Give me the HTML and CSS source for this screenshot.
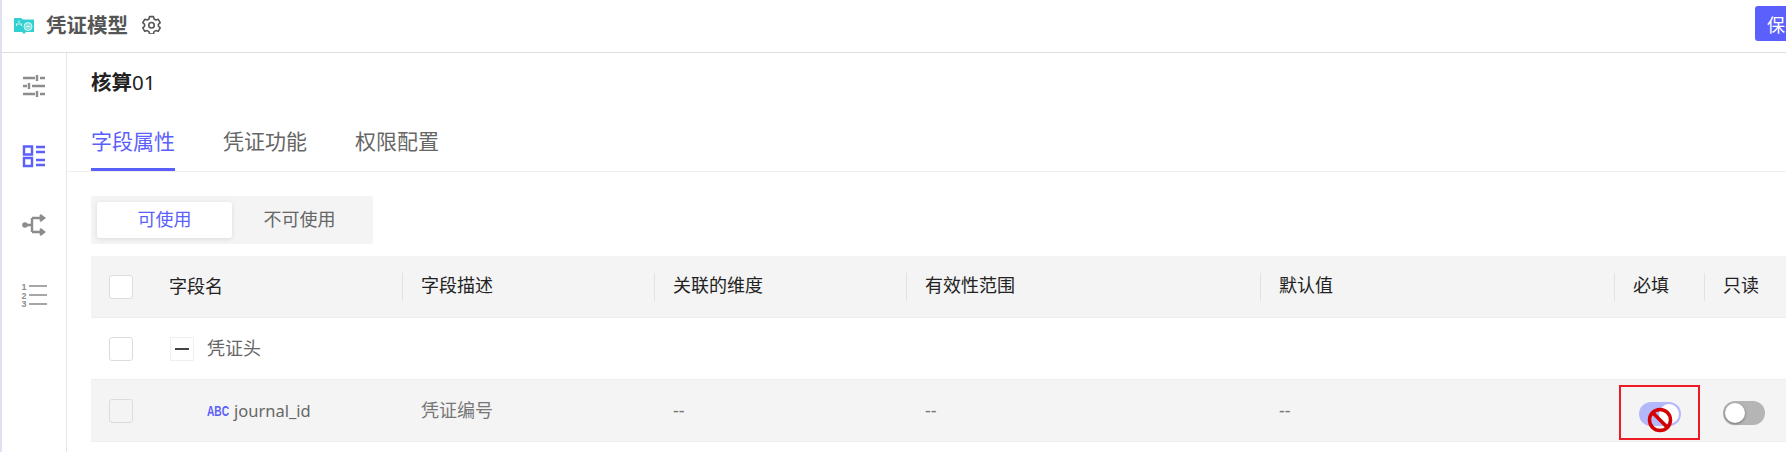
FILE: index.html
```html
<!DOCTYPE html>
<html lang="zh-CN">
<head>
    <meta charset="UTF-8">
    <title>凭证模型</title>
    <link rel="stylesheet" href="styles.css">
</head>
<body>
    <header class="topbar">
        <svg class="logo" width="20" height="17" viewBox="0 0 20 17">
            <path d="M0 1h7l2 1.500h11V15h-8l-2 2-2-2H0z" fill="#2fd0cf"/>
            <path d="M5 3.500v2.500M2.500 9V7h5v2" fill="none" stroke="#c9f4f3" stroke-width="1.200"/>
            <circle cx="14" cy="9.500" r="4" fill="#7fe3e2" stroke="#d8f8f7" stroke-width="1"/>
            <path d="M12.500 9.500h3" stroke="#fff" stroke-width="1"/>
        </svg>
        <span class="app-title">凭证模型</span>
        <svg class="gear" width="19" height="19" viewBox="0 0 24 24" fill="none" stroke="#555" stroke-width="2" stroke-linejoin="round">
            <path d="M9.500 2h5l.7 3 2.300 1.300 3-.9 2.500 4.300-2.300 2.100v2.400l2.300 2.100-2.500 4.300-3-.9-2.300 1.300-.7 3h-5l-.7-3-2.300-1.300-3 .9L1 16.300l2.300-2.100v-2.400L1 9.700l2.500-4.300 3 .9 2.300-1.300z"/>
            <circle cx="12" cy="13" r="3.500"/>
        </svg>
        <button class="save-btn">保存</button>
    </header>

    <div class="main">
        <nav class="sidebar">
            <svg class="side-icon" width="26" height="24" viewBox="0 0 26 24" fill="none" stroke="#8c8c8c" stroke-width="2.400">
                <path d="M2 4h12M19 4h5M16 1v6M2 12h4M11 12h13M8 9v6M2 20h12M19 20h5M16 17v6"/>
            </svg>
            <svg class="side-icon active" width="26" height="24" viewBox="0 0 26 24" fill="none" stroke="#5b5ffb" stroke-width="2.400">
                <path d="M3 2.500h8v8H3zM3 14h8v8H3zM15 3h9M15 8h9M15 16h9M15 21h9"/>
            </svg>
            <svg class="side-icon" width="26" height="24" viewBox="0 0 26 24" fill="none" stroke="#8c8c8c" stroke-width="2.400">
                <circle cx="4" cy="12" r="2.800" fill="#8c8c8c" stroke="none"/>
                <path d="M5 12h6M11 5v14M11 5h11M11 19h11M19 2l4 3-4 3M19 16l4 3-4 3"/>
            </svg>
            <svg class="side-icon" width="28" height="24" viewBox="0 0 28 24" fill="none" stroke="#a6a6a6" stroke-width="1.800">
                <path d="M9 3h18M9 12h18M9 21h18"/>
                <text class="num" x="1.500" y="6.500">1</text>
                <text class="num" x="1.500" y="15.500">2</text>
                <text class="num" x="1.500" y="24">3</text>
            </svg>
        </nav>

        <div class="content">
            <div class="model-name"><b>核算</b>01</div>
            <div class="tabs">
                <a class="tab active">字段属性</a>
                <a class="tab">凭证功能</a>
                <a class="tab">权限配置</a>
            </div>

            <div class="segment">
                <span class="seg-item active">可使用</span>
                <span class="seg-item">不可使用</span>
            </div>

            <div class="table">
                <div class="row head">
                    <div class="name-cell"><i class="check"></i><span class="head-name">字段名</span></div>
                    <div class="th">字段描述</div>
                    <div class="th">关联的维度</div>
                    <div class="th">有效性范围</div>
                    <div class="th">默认值</div>
                    <div class="th">必填</div>
                    <div class="th">只读</div>
                </div>
                <div class="row">
                    <div class="name-cell">
                        <i class="check"></i>
                        <span class="collapse"></span>
                        <span class="group-name">凭证头</span>
                    </div>
                </div>
                <div class="row disabled">
                    <div class="name-cell">
                        <i class="check"></i>
                        <span class="type-abc">ABC</span>
                        <span class="field-name">journal_id</span>
                    </div>
                    <div class="td">凭证编号</div>
                    <div class="td">--</div>
                    <div class="td">--</div>
                    <div class="td">--</div>
                    <div class="td toggle-cell">
                        <span class="toggle on"></span>
                        <div class="mark-box"></div>
                        <svg class="no-cursor" width="26" height="26" viewBox="0 0 26 26" fill="none" stroke="#d40000" stroke-width="3.500">
                            <circle cx="13" cy="13" r="10.500"/>
                            <path d="M6 6l14 14"/>
                        </svg>
                    </div>
                    <div class="td toggle-cell ro">
                        <span class="toggle off"></span>
                    </div>
                </div>
            </div>
        </div>
    </div>
</body>
</html>
```

FILE: styles.css
```css
html, body {
    height: 100%;
}

body {
    font-family: "Noto Sans", "Noto Sans CJK SC", sans-serif;
    background-color: #ffffff;
    color: #222;
    margin: 0;
    overflow: hidden;
    border-left: 2px solid #dfe1f0;
    box-sizing: border-box;
}

.topbar {
    height: 52px;
    display: flex;
    align-items: center;
    border-bottom: 1px solid #dcdce2;
    padding-left: 12px;
}

.logo {
    margin-top: -2px;
}

.app-title {
    font-size: 20.5px;
    font-weight: 700;
    color: #555;
    margin-left: 12px;
    margin-top: -3px;
    line-height: 26px;
}

.gear {
    margin-left: 14px;
    margin-top: -3px;
}

.save-btn {
    margin-left: auto;
    margin-right: -30px;
    margin-top: -5px;
    width: 61px;
    height: 35px;
    flex: none;
    padding: 0 0 0 12px;
    text-align: left;
    white-space: nowrap;
    border: none;
    border-radius: 3px;
    background-color: #5b5ffb;
    color: white;
    font-family: inherit;
    font-size: 18px;
}

.main {
    display: flex;
}

.sidebar {
    width: 64px;
    height: 399px;
    flex: none;
    border-right: 1px solid #e6e6e6;
    display: flex;
    flex-direction: column;
    align-items: center;
    padding-top: 21px;
    gap: 45.5px;
}

.side-icon {
    overflow: visible;
}

.num {
    font-family: "Liberation Sans", sans-serif;
    font-size: 9px;
    font-weight: 700;
    fill: #8c8c8c;
    stroke: none;
}

.content {
    flex: 1;
    min-width: 0;
}

.model-name {
    font-size: 20.5px;
    line-height: 28px;
    color: #222;
    padding: 15px 0 0 24px;
    height: 37px;
}

.tabs {
    display: flex;
    gap: 48px;
    padding-left: 24px;
    height: 66px;
    border-bottom: 1px solid #efefef;
}

.tab {
    font-size: 21px;
    line-height: 28px;
    color: #666;
    padding-top: 22px;
    height: 44px;
}

.tab.active {
    color: #5b5ffb;
    height: 41px;
    border-bottom: 3px solid #5b5ffb;
}

.segment {
    display: flex;
    width: 270px;
    height: 36px;
    margin: 24px 0 0 24px;
    padding: 6px;
    background-color: #f4f4f4;
    border-radius: 3px;
}

.seg-item {
    width: 135px;
    text-align: center;
    font-size: 18px;
    line-height: 34px;
    color: #666;
}

.seg-item.active {
    background-color: #fff;
    color: #5b5ffb;
    border-radius: 3px;
    box-shadow: 0 1px 5px rgba(0, 0, 0, .1);
}

.table {
    margin: 12px 0 0 24px;
}

.row {
    display: grid;
    grid-template-columns: 311px 252px 252px 354px 354px 90px 82px;
    align-items: center;
    height: 61px;
    border-bottom: 1px solid #eee;
}

.head, .disabled {
    background-color: #f4f4f4;
}

.name-cell {
    display: flex;
    align-items: center;
    padding-left: 18px;
    font-size: 18px;
    line-height: 24px;
}

.name-cell span {
    margin-top: -2px;
}

.check {
    width: 22px;
    height: 22px;
    flex: none;
    border: 1px solid #dcdcdc;
    border-radius: 3px;
    background-color: #fff;
}

.disabled .check {
    background-color: #f4f4f4;
}

.head-name {
    margin-left: 36px;
}

.name-cell .collapse {
    width: 22px;
    height: 22px;
    flex: none;
    margin: 0 0 0 37px;
    border: 1px solid #efefef;
    display: flex;
    align-items: center;
    justify-content: center;
}

.collapse::after {
    content: "";
    width: 14px;
    height: 2px;
    background-color: #444;
}

.group-name {
    margin-left: 13px;
    color: #666;
}

.name-cell .type-abc {
    margin: 0 0 0 74px;
    width: 21px;
    font-family: "Liberation Sans", sans-serif;
    font-size: 15px;
    font-weight: 700;
    color: #5b5ffb;
    transform: scaleX(.68);
    transform-origin: left center;
    white-space: nowrap;
}

.name-cell .field-name {
    margin: 0 0 0 6px;
    color: #666;
    font-size: 16.5px;
}

.th {
    height: 28px;
    line-height: 25px;
    border-left: 1px solid #e2e2e2;
    padding-left: 18px;
    font-size: 18px;
}

.td {
    padding-left: 19px;
    font-size: 18px;
    line-height: 24px;
    margin-top: -2px;
    color: #777;
}

.toggle-cell {
    position: relative;
    padding-left: 25px;
    display: flex;
    margin-top: 7px;
}

.toggle-cell.ro {
    padding-left: 19px;
    margin-top: 5px;
}

.toggle {
    width: 42px;
    height: 24px;
    border-radius: 12px;
    display: flex;
    align-items: center;
    padding: 0 2px;
    box-sizing: border-box;
}

.toggle::after {
    content: "";
    width: 20px;
    height: 20px;
    border-radius: 50%;
    background-color: #fff;
}

.toggle.on {
    background-color: #b3b8fb;
    justify-content: flex-end;
}

.toggle.off {
    background-color: #b5b5b5;
}

.toggle.off::after {
    box-shadow: 0 1px 3px rgba(0, 0, 0, .4);
}

/* annotation over the toggle */
.mark-box {
    position: absolute;
    left: 5px;
    top: -17px;
    width: 77px;
    height: 51px;
    border: 2px solid #ed1c24;
}

.no-cursor {
    position: absolute;
    left: 33px;
    top: 5px;
}
```
